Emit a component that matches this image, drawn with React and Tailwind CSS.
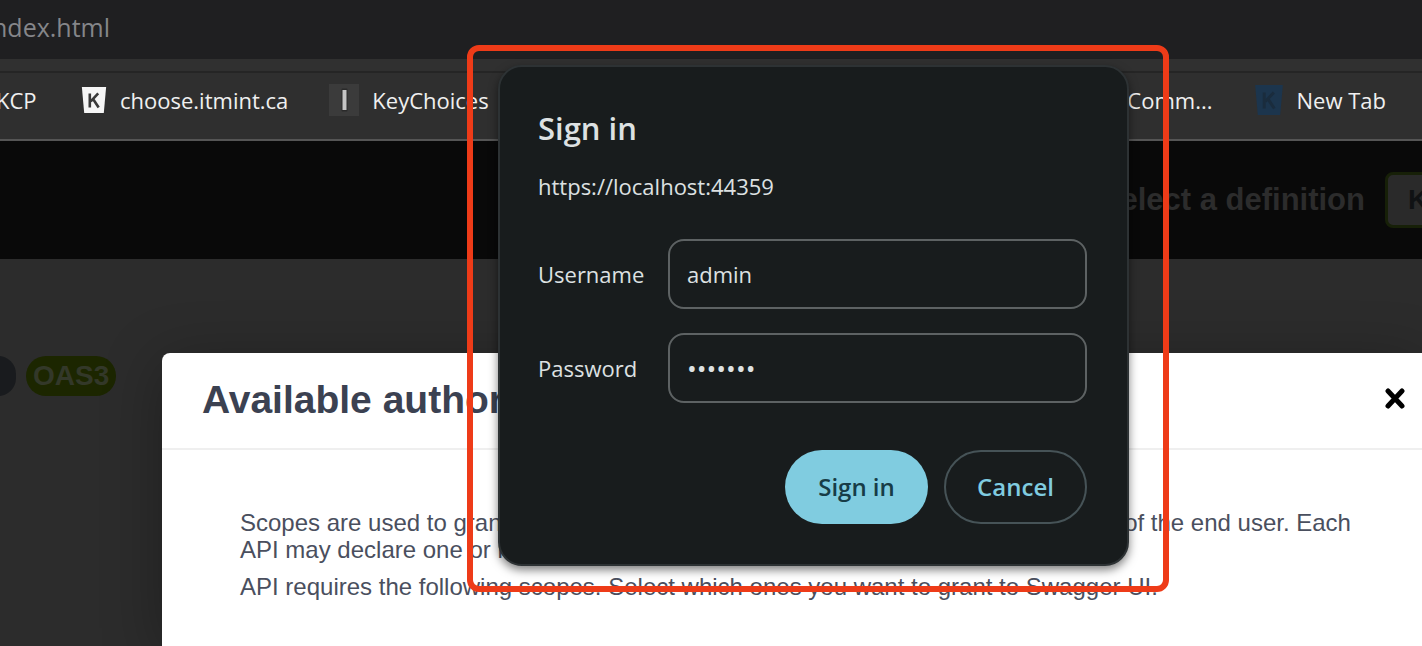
import { useState } from "react";

function BucketIcon({ className, fill, letter }) {
  return (
    <svg viewBox="0 0 28 30" className={className} aria-hidden="true">
      <path d="M1 1h26l-2.5 28h-21z" fill={fill} />
      <path
        d="M9.5 8v15M18.5 8l-8 8.5M13 14l6 9"
        fill="none"
        stroke={letter}
        strokeWidth="2.8"
      />
    </svg>
  );
}

function LineIcon({ className }) {
  return (
    <svg viewBox="0 0 30 32" className={className} aria-hidden="true">
      <rect width="30" height="32" fill="#3b3b3b" />
      <rect x="12.5" y="4.5" width="6" height="23" rx="1" fill="#2a2a2a" />
      <rect x="13.5" y="6" width="4" height="20" fill="#c4c4c4" />
    </svg>
  );
}

function CloseIcon({ className }) {
  return (
    <svg viewBox="0 0 20 22" className={className} aria-hidden="true">
      <path
        d="M3 3l14 15M17 3L3 18"
        stroke="#000"
        strokeWidth="5"
        strokeLinecap="round"
      />
    </svg>
  );
}

function BookmarksBar() {
  return (
    <nav className="flex h-[70px] shrink-0 items-center justify-between border-t-2 border-[#252525] border-b-2 border-b-[#555] bg-[#2f2f2f] pr-9 pb-3 text-[22px] whitespace-nowrap text-[#f0f0f0]">
      <div className="flex items-center">
        <a href="#kcp" className="-ml-1 w-12">
          KCP
        </a>
        <a href="#choose" className="ml-9 flex items-center gap-3">
          <BucketIcon className="h-7 w-7" fill="#f6f6f6" letter="#3a3a3a" />
          choose.itmint.ca
        </a>
        <a href="#keychoices" className="ml-10 flex items-center gap-3">
          <LineIcon className="h-8 w-8" />
          KeyChoices
        </a>
      </div>
      <div className="flex items-center">
        <a href="#comm">Comm...</a>
        <a href="#newtab" className="ml-10 flex items-center gap-3">
          <BucketIcon className="h-8 w-8" fill="#1c354d" letter="#1a2c3d" />
          New Tab
        </a>
      </div>
    </nav>
  );
}

function SignInDialog() {
  const [username, setUsername] = useState("admin");
  const [password, setPassword] = useState("swagger");

  return (
    <form
      onSubmit={(e) => e.preventDefault()}
      className="rounded-3xl border-2 border-[#2d3234] bg-[#181c1d] py-10 pr-10 pl-[38px] text-[22px] text-[#dde1e2] shadow-[0_4px_10px_rgba(0,0,0,0.5)]"
    >
      <h1 className="text-[31px] leading-[42px] font-semibold">Sign in</h1>
      <p className="mt-[21px] leading-8">https://localhost:44359</p>

      <div className="mt-[37px] grid grid-cols-[130px_1fr] items-center gap-y-6">
        <label htmlFor="username">Username</label>
        <input
          id="username"
          type="text"
          value={username}
          onChange={(e) => setUsername(e.target.value)}
          className="h-[70px] w-full rounded-2xl border-2 border-[#5d6263] bg-transparent px-[17px] outline-none"
        />
        <label htmlFor="password">Password</label>
        <input
          id="password"
          type="password"
          value={password}
          onChange={(e) => setPassword(e.target.value)}
          className="h-[70px] w-full rounded-2xl border-2 border-[#5d6263] bg-transparent px-[17px] text-[26px] outline-none"
        />
      </div>

      <div className="mt-[47px] flex justify-end gap-4 text-2xl font-semibold">
        <button
          type="submit"
          className="h-[74px] w-[143px] rounded-full bg-[#80cce0] text-[#173c47]"
        >
          Sign in
        </button>
        <button
          type="button"
          className="h-[74px] w-[143px] rounded-full border-2 border-[#465357] text-[#80cce0]"
        >
          Cancel
        </button>
      </div>
    </form>
  );
}

export default function App() {
  return (
    <div className="relative flex h-screen flex-col overflow-hidden bg-[#2c2c2c] font-['Open_Sans',sans-serif]">
      {/* Address bar */}
      <div className="flex h-[59px] shrink-0 items-center bg-[#1f1f21] pb-1 text-[25px] text-[#85868a]">
        <span className="-ml-2">ndex.html</span>
      </div>
      <div className="h-3 shrink-0 bg-[#303030]" />
      <BookmarksBar />

      {/* Swagger top bar */}
      <header className="flex h-[118px] shrink-0 items-center justify-end gap-5 bg-[#090909] font-['Liberation_Sans',sans-serif] font-bold">
        <label
          htmlFor="definition"
          className="text-[31px] whitespace-nowrap text-[#2c2c2c]"
        >
          Select a definition
        </label>
        <select
          id="definition"
          className="-mr-16 h-14 w-[101px] appearance-none rounded-lg border-[3px] border-[#172008] bg-[#2a2a2a] px-5 text-[28px] text-[#101214]"
        >
          <option>KCP</option>
        </select>
      </header>

      <main className="flex flex-1 font-['Liberation_Sans',sans-serif]">
        <div className="flex w-[162px] shrink-0 items-start gap-2.5 pt-[97px]">
          <span className="-ml-5 h-10 w-9 shrink-0 rounded-full bg-[#191b1e]" />
          <span className="flex h-10 items-center rounded-full bg-[#1c2600] px-[7px] text-[28px] font-bold text-[#333829]">
            OAS3
          </span>
        </div>

        {/* Available authorizations */}
        <section className="mt-[94px] flex-1 rounded-tl-lg bg-white text-[#3b4151] shadow-[0_10px_60px_rgba(0,0,0,0.3)]">
          <div className="flex h-[97px] items-center justify-between border-b-2 border-[#efefef] pr-4 pb-1 pl-10">
            <h2 className="pt-1 text-[39px] font-bold whitespace-nowrap">
              Available authorizations
            </h2>
            <button type="button" aria-label="Close">
              <CloseIcon className="h-[22px] w-[22px]" />
            </button>
          </div>
          <div className="pt-[59px] pr-14 pl-[78px] text-2xl leading-[27px] text-[#4a4f5e]">
            <p>
              Scopes are used to grant an application different levels of access
              to data on behalf of the end user. Each API may declare one or
              more scopes.
            </p>
            <p className="mt-2.5">
              API requires the following scopes. Select which ones you want to
              grant to Swagger UI.
            </p>
          </div>
        </section>
      </main>

      {/* Highlight frame round the prompt */}
      <div className="absolute top-[45px] left-[467px] w-[702px] rounded-xl border-6 border-[#ee3b18] pt-3.5 pr-[34px] pb-5 pl-[25px]">
        <SignInDialog />
      </div>
    </div>
  );
}
